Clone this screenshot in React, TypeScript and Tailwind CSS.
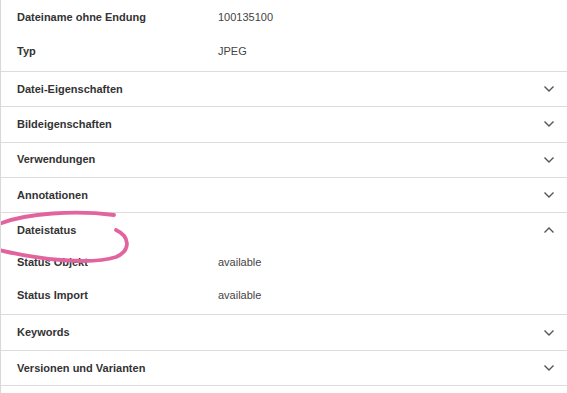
import * as React from "react";

function Chevron({ up }: { up?: boolean }) {
  return (
    <svg width="12" height="8" viewBox="0 0 12 8" className="shrink-0">
      <path
        d={up ? "M1.5 6.5 L6 2 L10.5 6.5" : "M1.5 1.5 L6 6 L10.5 1.5"}
        fill="none"
        stroke="#555"
        strokeWidth="1.4"
      />
    </svg>
  );
}

function Field({ label, value, h = "h-[34px]" }: { label: string; value: string; h?: string }) {
  return (
    <div className={`flex items-center ${h}`}>
      <div className="w-[217px] pl-4 font-bold text-[#333]">{label}</div>
      <div className="text-[#444]">{value}</div>
    </div>
  );
}

function Section({ title, open, children }: { title: string; open?: boolean; children?: React.ReactNode }) {
  return (
    <div className="border-t border-[#dcdcdc]">
      <div className="flex items-center justify-between h-[34.3px] pl-4 pr-[12px]">
        <span className="font-bold text-[#333]">{title}</span>
        <Chevron up={open} />
      </div>
      {open && <div className="pb-[1px]">{children}</div>}
    </div>
  );
}

export default function App() {
  return (
    <div
      className="relative w-[567px] h-[393px] bg-white overflow-hidden text-[11px] border-l border-[#d8d8d8]"
      style={{ fontFamily: '"Liberation Sans", Arial, sans-serif' }}
    >
      <div className="pb-[3px]">
        <Field label="Dateiname ohne Endung" value="100135100" />
        <Field label="Typ" value="JPEG" />
      </div>
      <Section title="Datei-Eigenschaften" />
      <Section title="Bildeigenschaften" />
      <Section title="Verwendungen" />
      <Section title="Annotationen" />
      <Section title="Dateistatus" open>
        <Field label="Status Objekt" value="available" h="h-[33px] pb-[3px]" />
        <Field label="Status Import" value="available" h="h-[33px] pb-[3px]" />
      </Section>
      <Section title="Keywords" />
      <Section title="Versionen und Varianten" />
      <div className="border-t border-[#dcdcdc]" />

      {/* hand-drawn marker circle around "Dateistatus" */}
      <svg className="absolute left-0 top-0 pointer-events-none" width="567" height="393">
        <path
          d="M-2 224 C 25 213, 75 210, 113 215"
          fill="none"
          stroke="#e2649f"
          strokeWidth="3.8"
          strokeLinecap="round"
        />
        <path
          d="M115 230 C 128 236, 131 250, 115 257 C 90 265, 40 260, -2 250"
          fill="none"
          stroke="#e2649f"
          strokeWidth="3.8"
          strokeLinecap="round"
        />
      </svg>
    </div>
  );
}
